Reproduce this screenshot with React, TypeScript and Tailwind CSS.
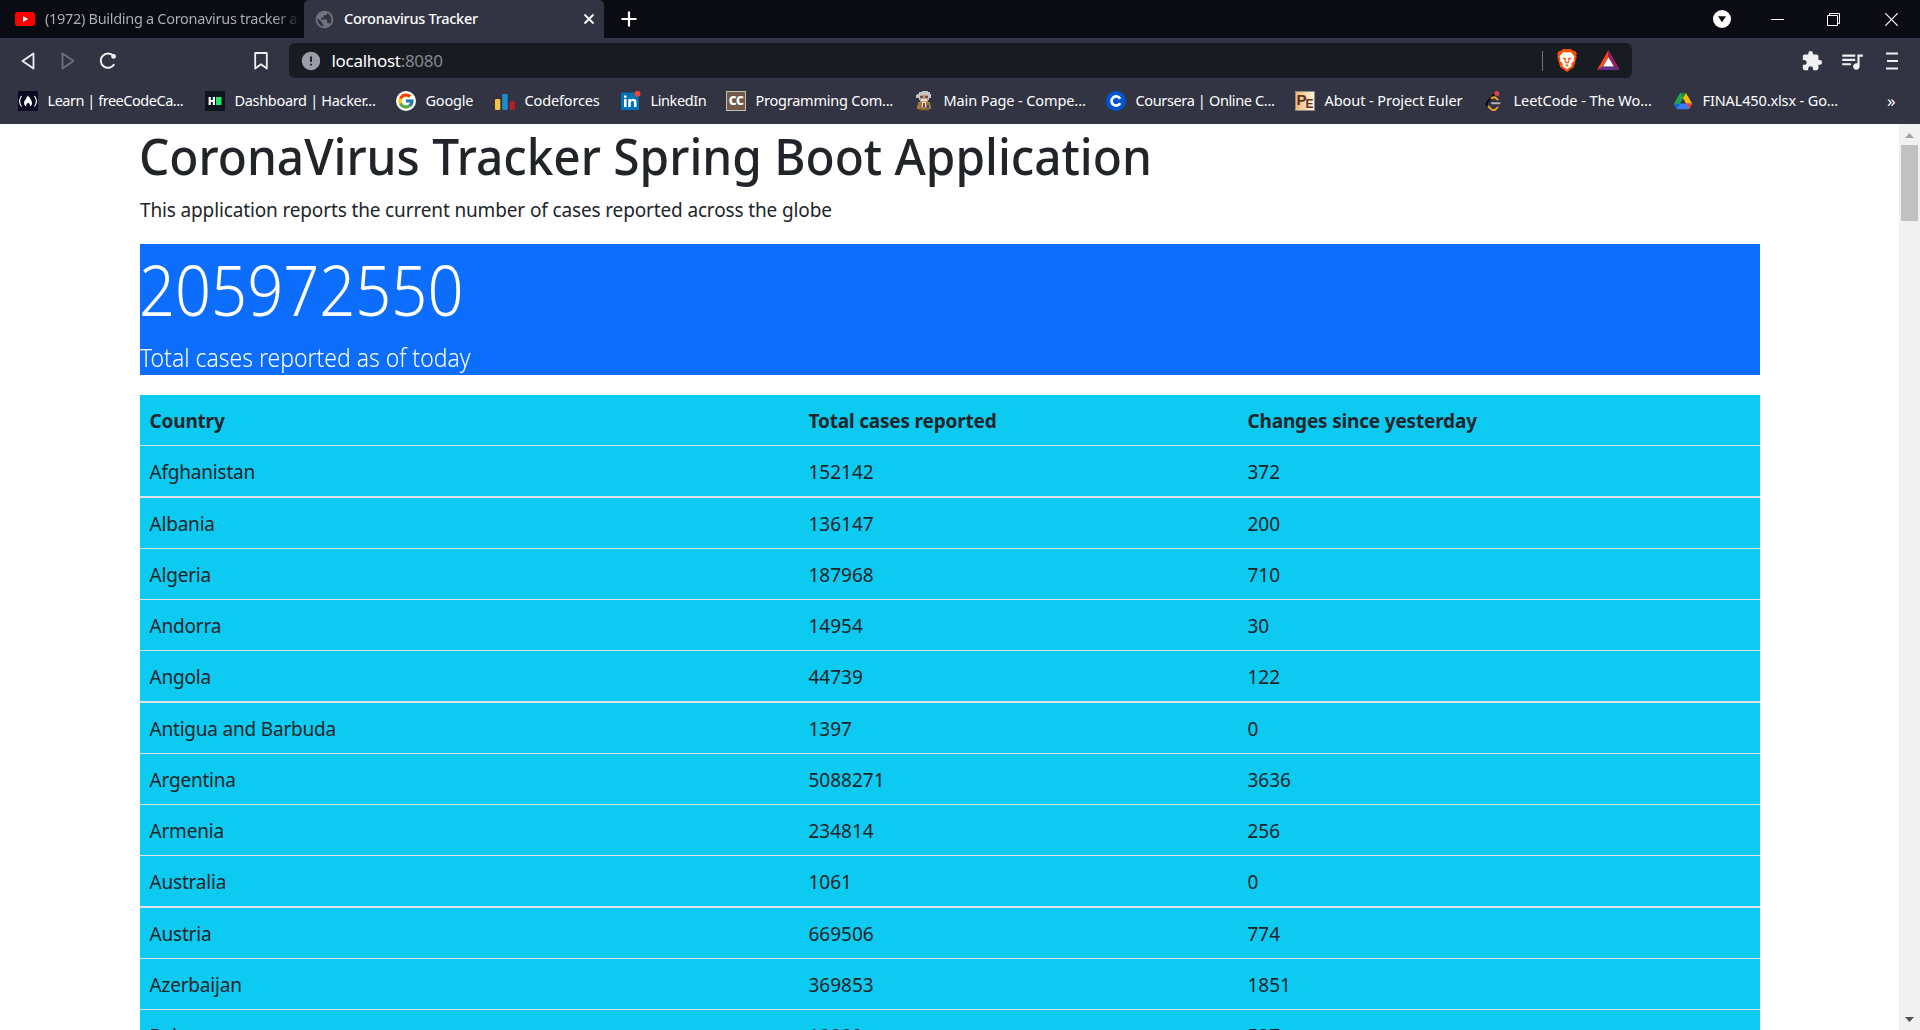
import type { ReactNode } from 'react';
import { FcGoogle } from 'react-icons/fc';
import { MdExtension, MdQueueMusic, MdPublic, MdError } from 'react-icons/md';

const rows: [string, string, string][] = [
  ['Afghanistan', '152142', '372'],
  ['Albania', '136147', '200'],
  ['Algeria', '187968', '710'],
  ['Andorra', '14954', '30'],
  ['Angola', '44739', '122'],
  ['Antigua and Barbuda', '1397', '0'],
  ['Argentina', '5088271', '3636'],
  ['Armenia', '234814', '256'],
  ['Australia', '1061', '0'],
  ['Austria', '669506', '774'],
  ['Azerbaijan', '369853', '1851'],
  ['Bahamas', '18889', '527'],
];

function FreeCodeCamp() {
  return (
    <svg viewBox="0 0 20 20" className="size-5">
      <rect width="20" height="20" fill="#0a0a23" />
      <path d="M3.500 5Q-.3 10 3.500 15.500M16.500 5Q20.300 10 16.500 15.500" fill="none" stroke="#fff" strokeWidth="1.200" />
      <path d="M9.700 4.500c2 2 4.300 5 4.300 7.500 0 1.800-1 3-2.200 3.500.6-1.500.1-2.800-1.600-3.800-1.600.9-2.500 2.300-1.800 3.800C6.800 14.800 6 13.600 6 12c0-2.300 2.400-4 3.700-7.500Z" fill="#fff" />
    </svg>
  );
}

function HackerRank() {
  return (
    <svg viewBox="0 0 20 20" className="size-5">
      <rect width="20" height="20" fill="#0e141e" />
      <path d="M3.600 6h2.200v3h2V6H10v8H7.800v-3h-2v3H3.600Z" fill="#fff" />
      <rect x="11" y="6" width="5.500" height="8" fill="#1ee866" />
    </svg>
  );
}

function Codeforces() {
  return (
    <svg viewBox="0 0 20 20" className="size-5">
      <rect x="0" y="8" width="5.300" height="11" rx="1.300" fill="#f6c444" />
      <rect x="7.200" y="3" width="5.500" height="16" rx="1.300" fill="#1a8dd0" />
      <rect x="14.700" y="10" width="5.300" height="9" rx="1.300" fill="#b21f24" />
    </svg>
  );
}

function LinkedIn() {
  return (
    <svg viewBox="0 0 20 20" className="size-5">
      <rect x="0" y="1.500" width="18" height="17.500" rx="1.500" fill="#0274b3" />
      <path d="M3 8h2.500v8H3ZM3 4.600h2.500v2.200H3ZM7.300 8h2.500v1.100c1.600-2.100 5.700-1.700 5.700 1.800V16H13v-4.400c0-2.400-3.200-2.100-3.200 0V16H7.300Z" fill="#fff" />
      <circle cx="16.500" cy="2.800" r="3" fill="#f0433a" />
    </svg>
  );
}

function CodeChef() {
  return (
    <span className="flex size-5 items-center justify-center border border-[#cbbfae] bg-[#6f5a49] pb-px font-['Open_Sans',sans-serif] text-[12px] font-extrabold tracking-[-0.5px] text-white">
      CC
    </span>
  );
}

function Scientist() {
  return (
    <svg viewBox="0 0 20 20" className="size-5" shapeRendering="crispEdges">
      <path d="M3 3h2V1h3V0h6v1h2v2h1v4h-2v2H5V7H2V4h1Z" fill="#c4c5c6" />
      <path d="M6 4h8v7H6Z" fill="#c99b72" />
      <path d="M6 5h3v2H6Zm5 0h3v2h-3Z" fill="#5d544e" />
      <path d="M7 8h6v2H7Z" fill="#dfdedb" />
      <path d="M4 11h12v3h1v4h-2v1H5v-1H3v-4h1Z" fill="#9a7840" />
      <path d="M8 11h4v5H8Z" fill="#f1ece0" />
      <path d="M9 12h2v4H9Z" fill="#9c2b2e" />
      <path d="M13 14h2v3h-2Z" fill="#3c4d7c" />
      <path d="M5 18h4v2H5Zm6 0h4v2h-4Z" fill="#6b4d28" />
    </svg>
  );
}

function Coursera() {
  return (
    <svg viewBox="0 0 20 20" className="size-5">
      <circle cx="10" cy="10" r="10" fill="#0056d2" />
      <path d="M14.200 12.200A4.600 4.600 0 1 1 14.200 7.800" fill="none" stroke="#fff" strokeWidth="2.700" />
    </svg>
  );
}

function ProjectEuler() {
  return (
    <span className="flex size-5 items-center justify-center border border-[#8f8a80] bg-linear-to-r from-[#f2b877] to-[#fff3df] font-['Liberation_Sans',sans-serif] font-bold leading-none text-[#5a3420]">
      <span className="-mt-1 text-[15px]">P</span>
      <span className="-ml-px mt-1.5 text-[12px]">E</span>
    </span>
  );
}

function LeetCode() {
  return (
    <svg viewBox="0 0 20 20" className="size-5">
      <path d="M11.500 2.500 3.800 10.300C2 12.200 2 13.800 3.800 15.500" fill="none" stroke="#070706" strokeWidth="1.900" strokeLinecap="round" />
      <path d="m4.500 15.500 2.600 2.600c1.500 1.300 3.500 1.200 5-.2l1.500-1.500M7.500 7.200c1.700-1.300 3.300-1.200 4.600 0l1.500 1.400" fill="none" stroke="#f5a122" strokeWidth="1.900" strokeLinecap="round" />
      <path d="M8 12.200h7.500" stroke="#b3b3b3" strokeWidth="1.900" strokeLinecap="round" />
      <circle cx="12.800" cy="2.500" r="2.500" fill="#d8494b" />
    </svg>
  );
}

function Drive() {
  return (
    <svg viewBox="0 0 20 20" className="size-5">
      <path d="M7 2h6L7 12.500 4 18 .8 13Z" fill="#20a851" />
      <path d="M7 2h6l6.300 11h-6Z" fill="#fdba04" />
      <path d="M7 2h6l-3 5.300Z" fill="#148740" />
      <path d="M7 12.500h12.300L16 18.300H3.700Z" fill="#3c7ef3" />
      <path d="M13.200 12.500h6.100L16 18.300Z" fill="#ea4435" />
      <path d="M.8 12.800H7l-3.200 5.500Z" fill="#1967d2" />
    </svg>
  );
}

function BraveLion() {
  return (
    <svg viewBox="0 0 20 23" className="h-[23px] w-5">
      <path d="m6 0h8l1.800 1.800 2.400.2 1.600 3-.7 1.600.5 1.400-2.800 10L10 23l-6.800-5L.4 8l.5-1.400L.2 5l1.600-3 2.400-.2Z" fill="#fb5003" />
      <path d="m6.300 3 3.700.5 3.700-.5 3.800 4.300-.8 2.500.3 2-2.800 2.900.5 2.200L10 20.300l-4.700-3.400.5-2.200L3 11.800l.3-2-.8-2.500Z" fill="#fff" />
      <path d="m5 8.300 4 1-.4 2 .6 1.500.8.500.8-.5.6-1.500-.4-2 4-1-2.400 2.600-.8 1.200.6.900-1.800 1.400L10 13.800l-.6.600L7.600 13l.6-.9-.8-1.200ZM8 16.300l2-1 2 1-2 1.300Z" fill="#fb5003" />
    </svg>
  );
}

const bookmarks: { label: string; icon: ReactNode; style: string }[] = [
  { label: 'Learn | freeCodeCa...', icon: <FreeCodeCamp />, style: 'w-[187px] tracking-[-0.47px]' },
  { label: 'Dashboard | Hacker...', icon: <HackerRank />, style: 'w-[191px] tracking-[-0.32px]' },
  {
    label: 'Google',
    icon: (
      <span className="flex size-5 items-center justify-center rounded-full bg-white">
        <FcGoogle className="size-[18px]" />
      </span>
    ),
    style: 'w-[99px] tracking-[-0.2px]',
  },
  { label: 'Codeforces', icon: <Codeforces />, style: 'w-[126px] tracking-[-0.15px]' },
  { label: 'LinkedIn', icon: <LinkedIn />, style: 'w-[105px] tracking-[-0.4px]' },
  { label: 'Programming Com...', icon: <CodeChef />, style: 'w-[188px] tracking-[-0.23px]' },
  { label: 'Main Page - Compe...', icon: <Scientist />, style: 'w-[192px] tracking-[-0.1px]' },
  { label: 'Coursera | Online C...', icon: <Coursera />, style: 'w-[189px] tracking-[-0.36px]' },
  { label: 'About - Project Euler', icon: <ProjectEuler />, style: 'w-[189px] tracking-[-0.07px]' },
  { label: 'LeetCode - The Wo...', icon: <LeetCode />, style: 'w-[189px] tracking-[-0.04px]' },
  { label: 'FINAL450.xlsx - Go...', icon: <Drive />, style: 'w-[214px] tracking-[-0.13px]' },
];

function TabStrip() {
  return (
    <div className="flex h-[38px] items-center bg-[#0b0b14] text-[14.500px]">
      <div className="flex h-full w-[304px] items-center pl-[15px]">
        <svg viewBox="0 0 20 14" className="h-[14px] w-5 shrink-0">
          <rect width="20" height="14" rx="3" fill="#f00" />
          <path d="m8 4 5.200 3L8 10Z" fill="#fff" />
        </svg>
        <span className="ml-2.5 w-[255px] overflow-hidden whitespace-nowrap bg-linear-to-r from-[#b0b1b8] from-90% to-transparent bg-clip-text tracking-[-0.300px] text-transparent">
          (1972) Building a Coronavirus tracker app
        </span>
      </div>
      <div className="flex h-full w-[300px] items-center rounded-t-[5px] bg-[#323443] pl-[10px] pr-[9px]">
        <MdPublic className="size-[21px] text-[#70737b]" />
        <span className="ml-[9px] flex-1 whitespace-nowrap font-medium tracking-[-0.270px] text-white">Coronavirus Tracker</span>
        <svg viewBox="0 0 12 12" className="size-3" stroke="#fff" strokeWidth="1.800">
          <path d="m1.500 1.500 9 9m0-9-9 9" />
        </svg>
      </div>
      <svg viewBox="0 0 16 16" className="ml-[17px] size-4" stroke="#fff" strokeWidth="2.200">
        <path d="M8 .500v15M.500 8h15" />
      </svg>
      <div className="ml-auto flex items-center pr-[22px]">
        <svg viewBox="0 0 18 18" className="size-[18px]">
          <circle cx="9" cy="9" r="9" fill="#fff" />
          <path d="M5 6.300h8L9 12.300Z" fill="#0b0b14" />
        </svg>
        <svg viewBox="0 0 13 13" className="ml-10 size-[13px]">
          <path d="M0 6.500h13" stroke="#fff" />
        </svg>
        <svg viewBox="0 0 13 13" className="ml-[43px] size-[13px]" fill="none" stroke="#fff">
          <path d="M.500 2.500h10v10H.500ZM2.500 2.500v-2h10v10h-2" />
        </svg>
        <svg viewBox="0 0 13 13" className="ml-[45px] size-[13px]" fill="none" stroke="#fff" strokeWidth="1.200">
          <path d="m.300.300 12.400 12.400m0-12.400L.300 12.700" />
        </svg>
      </div>
    </div>
  );
}

function Toolbar() {
  return (
    <div className="flex h-[45px] items-center">
      <svg viewBox="0 0 14 18" className="ml-[21px] h-[18px] w-[14px]" fill="none" stroke="#f0f0f2" strokeWidth="1.800" strokeLinejoin="round">
        <path d="M12.500 1.500v15L1.500 9Z" />
      </svg>
      <svg viewBox="0 0 14 18" className="ml-[26px] h-[18px] w-[14px]" fill="none" stroke="#6e707c" strokeWidth="1.800" strokeLinejoin="round">
        <path d="M1.500 1.500v15l11-7.500Z" />
      </svg>
      <svg viewBox="0 0 18 18" className="ml-[24px] size-[18px]" fill="none" stroke="#f0f0f2" strokeWidth="2">
        <path d="M15.200 12.300A7.200 7.200 0 1 1 14.500 4" />
        <circle cx="14.600" cy="4.400" r="2.400" fill="#f0f0f2" stroke="none" />
      </svg>
      <svg viewBox="0 0 14 18" className="ml-[137px] h-[18px] w-[14px]" fill="none" stroke="#f0f0f2" strokeWidth="1.800" strokeLinejoin="round">
        <path d="M1.200 1h11.600v15.500L7 12.200l-5.800 4.300Z" />
      </svg>
      <div className="ml-[21px] flex h-[35px] w-[1343px] items-center rounded-[6px] bg-[#191b22] pl-[11px]">
        <MdError className="size-[22px] text-[#9a9ca8]" />
        <span className="ml-[9.500px] text-[17px] tracking-[-0.300px] text-white">
          localhost<span className="text-[#86888e]">:8080</span>
        </span>
        <div className="ml-auto flex items-center pr-[12px]">
          <span className="h-5 w-px bg-[#74767c]" />
          <span className="ml-[14px]">
            <BraveLion />
          </span>
          <svg viewBox="0 0 24 22" className="ml-[20px] h-[21px] w-[23px]">
            <path d="M12 0 0 21l6-3.500L12 7Z" fill="#ff4724" />
            <path d="m12 0 12 21-6-3.500L12 7Z" fill="#9e1f63" />
            <path d="M0 21h24l-6-3.500H6Z" fill="#662d91" />
            <path d="m12 7.500 5.700 9.800H6.300Z" fill="#fff" />
          </svg>
        </div>
      </div>
      <MdExtension className="ml-[169px] size-[22px] text-[#f0f0f2]" />
      <MdQueueMusic className="ml-[16px] size-[26px] text-[#f0f0f2]" />
      <svg viewBox="0 0 12 18" className="ml-[21px] h-[18px] w-3" stroke="#f0f0f2" strokeWidth="1.800">
        <path d="M0 1.500h12M1 9h11M0 16.500h12" />
      </svg>
    </div>
  );
}

function BookmarksBar() {
  return (
    <div className="flex h-[41px] items-center pb-[5px] pl-[18px] text-[14.500px] text-white">
      {bookmarks.map((b) => (
        <div key={b.label} className={`flex shrink-0 items-center gap-[9.500px] whitespace-nowrap ${b.style}`}>
          {b.icon}
          <span>{b.label}</span>
        </div>
      ))}
      <span className="text-[17px]">»</span>
    </div>
  );
}

function CasesTable() {
  return (
    <table className="mt-5 w-full table-fixed border-collapse text-left text-[19px] leading-[30px] text-[#212529]">
      <colgroup>
        <col className="w-[659px]" />
        <col className="w-[439px]" />
        <col />
      </colgroup>
      <thead>
        <tr>
          {['Country', 'Total cases reported', 'Changes since yesterday'].map((h) => (
            <th key={h} className="bg-[#0dcaf0] p-0 align-top font-bold">
              <div className="h-[51px] border-b border-[#dee2e6] px-[9.500px] py-[11px] tracking-[-0.180px]">{h}</div>
            </th>
          ))}
        </tr>
      </thead>
      <tbody>
        {rows.map((row, i) => (
          <tr key={row[0]}>
            {row.map((cell, c) => (
              <td key={c} className="bg-[#0dcaf0] p-0 align-top first:tracking-[-0.200px]">
                <div className={`border-[#dee2e6] px-[9.500px] py-[11px] ${i % 4 === 0 ? 'h-[52px] border-b-2' : 'h-[51px] border-b'}`}>
                  {cell}
                </div>
              </td>
            ))}
          </tr>
        ))}
      </tbody>
    </table>
  );
}

function Scrollbar() {
  return (
    <div className="flex w-[21px] shrink-0 flex-col items-center bg-[#f1f1f1]">
      <svg viewBox="0 0 9 5" className="mt-[9px] h-[5px] w-[9px] shrink-0">
        <path d="M4.500 0 9 5H0Z" fill="#a3a3a3" />
      </svg>
      <div className="mt-[7px] h-[76px] w-[17px] shrink-0 bg-[#c1c1c1]" />
      <svg viewBox="0 0 9 5" className="mb-2 mt-auto h-[5px] w-[9px] shrink-0">
        <path d="M0 0h9L4.500 5Z" fill="#505050" />
      </svg>
    </div>
  );
}

export default function App() {
  return (
    <div className="flex h-[1030px] w-[1920px] flex-col overflow-hidden bg-white font-['Noto_Sans',sans-serif]">
      <header className="shrink-0 bg-[#323443] [&_svg]:shrink-0">
        <TabStrip />
        <Toolbar />
        <BookmarksBar />
      </header>
      <div className="flex min-h-0 flex-1">
        <main className="min-w-0 flex-1 pl-[140px] pr-[139px] text-[#212529]">
          <h1 className="-ml-px h-[68px] w-fit origin-left scale-x-[0.955] whitespace-nowrap pt-[2px] text-[50px] font-medium leading-[60px]">
            CoronaVirus Tracker Spring Boot Application
          </h1>
          <p className="h-[52px] text-[19px] leading-[36px] tracking-[-0.140px]">
            This application reports the current number of cases reported across the globe
          </p>
          <section className="h-[131px] bg-[#0d6efd] font-light text-white">
            <h2 className="-ml-px w-fit origin-left scale-x-[0.902] text-[70px] leading-[90px]">205972550</h2>
            <p className="w-fit origin-left scale-x-[0.918] text-[25px] leading-[46px]">Total cases reported as of today</p>
          </section>
          <CasesTable />
        </main>
        <Scrollbar />
      </div>
    </div>
  );
}
